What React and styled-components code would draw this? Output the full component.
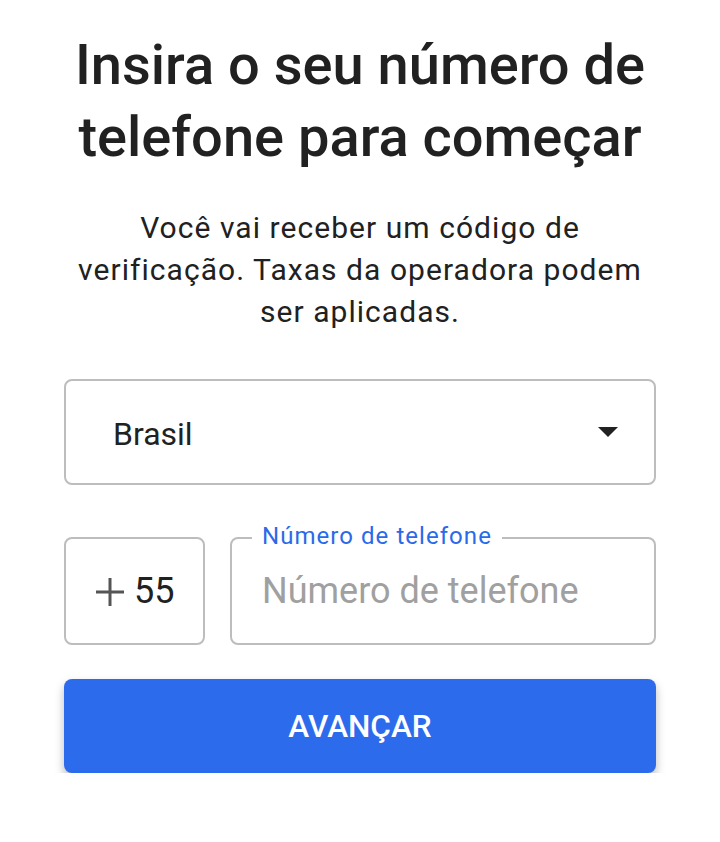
import React from "react";
import styled, { createGlobalStyle } from "styled-components";

const Global = createGlobalStyle`
  html, body { margin: 0; padding: 0; background: #ffffff; }
  body { font-family: Roboto, "Noto Sans", Arial, sans-serif; color: #212121; }
  * { box-sizing: border-box; }
`;

const Page = styled.main`
  width: 720px;
  padding: 29px 64px 0;
  display: flex;
  flex-direction: column;
`;

const Title = styled.h1`
  margin: 0;
  font-size: 56px;
  line-height: 72px;
  font-weight: 500;
  text-align: center;
  color: #212121;
`;

const Subtitle = styled.p`
  margin: 34px 6px 0;
  font-size: 30px;
  line-height: 42px;
  font-weight: 400;
  letter-spacing: 1.05px;
  text-align: center;
  color: #212121;
`;

const Select = styled.div`
  margin-top: 46px;
  height: 106px;
  border: 2px solid #bdbdbd;
  border-radius: 8px;
  display: flex;
  align-items: center;
  justify-content: space-between;
  padding: 4px 36px 0 47px;
  font-size: 32px;
  color: #212121;
`;

const Arrow = styled.span`
  width: 0;
  height: 0;
  margin-top: -4px;
  border-left: 10px solid transparent;
  border-right: 10px solid transparent;
  border-top: 10px solid #212121;
`;

const PhoneRow = styled.div`
  margin-top: 52px;
  display: flex;
  gap: 25px;
  height: 108px;
`;

const Box = styled.div`
  position: relative;
  height: 100%;
  border: 2px solid #bdbdbd;
  border-radius: 8px;
  display: flex;
  align-items: center;
  font-size: 36px;
  ${(p) => (p.$grow ? "flex: 1;" : "width: 141px;")}
  padding-left: 30px;
`;

const PlusIcon = styled.svg`
  width: 28px;
  height: 28px;
  margin-right: 10px;
  margin-top: 1px;
  flex: none;
`;

const Code = styled.span`
  color: #212121;
`;

const Placeholder = styled.span`
  color: #a0a0a0;
`;

const FloatLabel = styled.span`
  position: absolute;
  top: -15px;
  left: 20px;
  padding: 0 10px;
  background: #ffffff;
  color: #2a6ae9;
  font-size: 24px;
  line-height: 24px;
  letter-spacing: 1.05px;
`;

const Button = styled.button`
  margin-top: 34px;
  height: 94px;
  border: none;
  border-radius: 8px;
  background: #2d6bed;
  color: #ffffff;
  font-family: Roboto, "Noto Sans", Arial, sans-serif;
  font-size: 31.5px;
  font-weight: 500;
  box-shadow: 0 5px 10px rgba(0, 0, 0, 0.28);
`;

export default function App() {
  return (
    <>
      <Global />
      <Page>
        <Title>Insira o seu número de telefone para começar</Title>
        <Subtitle>
          Você vai receber um código de verificação. Taxas da operadora podem ser aplicadas.
        </Subtitle>
        <Select>
          <span>Brasil</span>
          <Arrow />
        </Select>
        <PhoneRow>
          <Box>
            <PlusIcon viewBox="0 0 28 28">
              <path d="M14 0v28M0 14h28" stroke="#555555" strokeWidth="3" fill="none" />
            </PlusIcon>
            <Code>55</Code>
          </Box>
          <Box $grow>
            <FloatLabel>Número de telefone</FloatLabel>
            <Placeholder>Número de telefone</Placeholder>
          </Box>
        </PhoneRow>
        <Button>AVANÇAR</Button>
      </Page>
    </>
  );
}
